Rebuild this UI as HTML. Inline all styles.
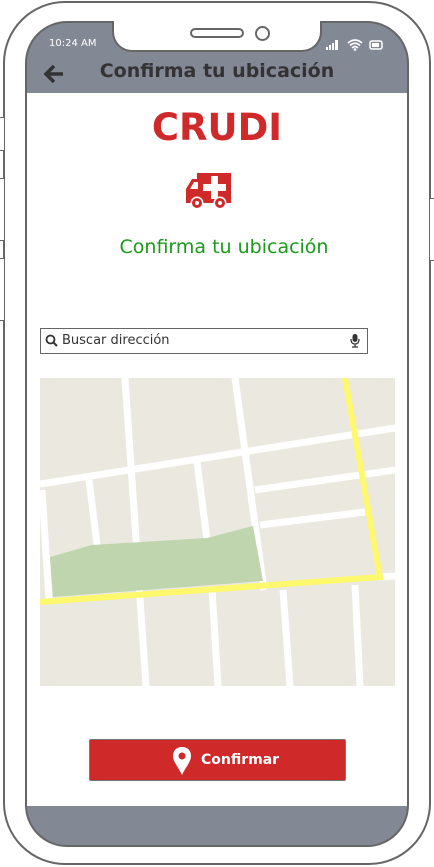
<!DOCTYPE html>
<html><head><meta charset="utf-8"><style>
*{margin:0;padding:0;box-sizing:border-box}
body{width:434px;height:867px;background:#fff;position:relative;overflow:hidden;font-family:"DejaVu Sans","Liberation Sans",sans-serif}
.a{position:absolute}
</style></head><body>
<div class="a" style="left:3px;top:1px;width:428px;height:864px;border:2px solid #666;border-radius:62px"></div>
<div class="a" style="left:0;top:117px;width:5px;height:34px;border:1.5px solid #666;border-left:none;background:#fff"></div>
<div class="a" style="left:0;top:178px;width:5px;height:63px;border:1.5px solid #666;border-left:none;background:#fff"></div>
<div class="a" style="left:0;top:258px;width:5px;height:63px;border:1.5px solid #666;border-left:none;background:#fff"></div>
<div class="a" style="left:429px;top:198px;width:5px;height:63px;border:1.5px solid #666;border-right:none;background:#fff"></div>
<div class="a" style="left:25px;top:21px;width:384px;height:826px;background:#838895;border:2px solid #666;border-radius:42px;overflow:hidden">
  <div class="a" style="left:0;top:70px;width:380px;height:713px;background:#fff"></div>
</div>
<div class="a" style="left:112px;top:19px;width:210px;height:33px;background:#fff;border:2px solid #666;border-top:none;border-radius:0 0 20px 20px"></div>
<div class="a" style="left:108px;top:18px;width:218px;height:3px;background:#fff"></div>
<div class="a" style="left:190px;top:28px;width:54px;height:10px;border:2px solid #666;border-radius:6px"></div>
<div class="a" style="left:255px;top:26px;width:15px;height:15px;border:2px solid #666;border-radius:50%"></div>
<div class="a" style="left:49px;top:38px;font-size:10px;color:#fff">10:24 AM</div>
<svg class="a" style="left:324px;top:38px" width="62" height="14">
<rect x="2" y="9" width="2" height="3" fill="#fff"/><rect x="5" y="7" width="2" height="5" fill="#fff"/><rect x="8" y="5" width="2" height="7" fill="#fff"/><rect x="11" y="2" width="3" height="10" fill="#fff"/>
<path d="M24 5 Q31 -1 38 5 M26 7.5 Q31 3 36 7.5 M28 10 Q31 7 34 10" stroke="#fff" stroke-width="1.6" fill="none"/><circle cx="31" cy="11.5" r="1.3" fill="#fff"/>
<rect x="46" y="3" width="12" height="8" rx="2" stroke="#fff" stroke-width="1.5" fill="none"/><rect x="48" y="5" width="7" height="4" fill="#fff"/>
</svg>
<svg class="a" style="left:43px;top:64px" width="22" height="20"><path d="M11 2 L3 10 L11 18 M3 10 H20" stroke="#333" stroke-width="3.5" fill="none"/></svg>
<div class="a" style="left:0;width:434px;top:60px;text-align:center;font-size:19px;font-weight:bold;color:#333">Confirma tu ubicación</div>
<div class="a" style="left:0;width:434px;top:106px;text-align:center;font-size:37px;font-weight:bold;color:#d0292a">CRUDI</div>
<svg class="a" style="left:186px;top:172px" width="46" height="38" viewBox="0 0 46 38">
<path d="M11 1 H45 V31 H0 V17 L6 7 H11 Z" fill="#d0292a"/><path d="M4 17 L8 10 H12 V17 Z" fill="#fff"/>
<path d="M25 4 H32 V12 H40 V19 H32 V27 H25 V19 H17 V12 H25 Z" fill="#fff"/>
<circle cx="11" cy="31" r="6.5" fill="#fff"/><circle cx="11" cy="31" r="5" fill="#d0292a"/>
<circle cx="34" cy="31" r="6.5" fill="#fff"/><circle cx="34" cy="31" r="5" fill="#d0292a"/>
<circle cx="11" cy="31" r="2" fill="#fff"/><circle cx="34" cy="31" r="2" fill="#fff"/>
</svg>
<div class="a" style="left:0;width:448px;top:236px;text-align:center;font-size:19px;color:#1a9a1a">Confirma tu ubicación</div>
<div class="a" style="left:40px;top:328px;width:328px;height:26px;border:1px solid #666"></div>
<svg class="a" style="left:45px;top:334px" width="14" height="14"><circle cx="5.5" cy="5.5" r="4" stroke="#333" stroke-width="1.8" fill="none"/><path d="M8.5 8.5 L12 12" stroke="#333" stroke-width="2"/></svg>
<div class="a" style="left:62px;top:333px;font-size:13px;color:#333">Buscar dirección</div>
<svg class="a" style="left:350px;top:333px" width="10" height="16"><rect x="2.5" y="1" width="5" height="8" rx="2.5" fill="#333"/><path d="M1 6 Q1 11 5 11 Q9 11 9 6 M5 11 V14 M2 14 H8" stroke="#333" stroke-width="1.2" fill="none"/></svg>
<svg class="a" style="left:40px;top:378px" width="355" height="308" viewBox="40 378 355 308">
<rect x="40" y="378" width="355" height="308" fill="#ebe8e0"/>
<g stroke="#fff" stroke-width="7" fill="none">
<path d="M125 378 L146 686"/>
<path d="M235 378 L264 590 M283 590 L290 686"/>
<path d="M212 590 L218 686 M355 585 L360 686"/>
<path d="M40 484 L395 428"/>
<path d="M255 490 L395 470"/>
<path d="M260 525 L365 512"/>
<path d="M89 480 L97 545"/>
<path d="M197 462 L207 540"/>
<path d="M42 490 L49 600"/>
<path d="M378 577 L395 576"/>
</g>
<path d="M50 557 L92 545 L207 538 L253 526 L263 581 L53 597 Z" fill="#bed5ae"/>
<path d="M40 602 L380 577 L345 378" stroke="#fdf86c" stroke-width="6" fill="none"/>
</svg>
<div class="a" style="left:89px;top:739px;width:257px;height:42px;background:#d0292a;border:1px solid #777;border-radius:2px"></div>
<svg class="a" style="left:172px;top:746px" width="20" height="30"><path d="M10 1 C4 1 1 5 1 10 C1 16 7 22 10 29 C13 22 19 16 19 10 C19 5 16 1 10 1 Z" fill="#fff"/><circle cx="10" cy="10" r="3.5" fill="#d0292a"/></svg>
<div class="a" style="left:201px;top:752px;font-size:14px;font-weight:bold;color:#fff">Confirmar</div>
</body></html>
